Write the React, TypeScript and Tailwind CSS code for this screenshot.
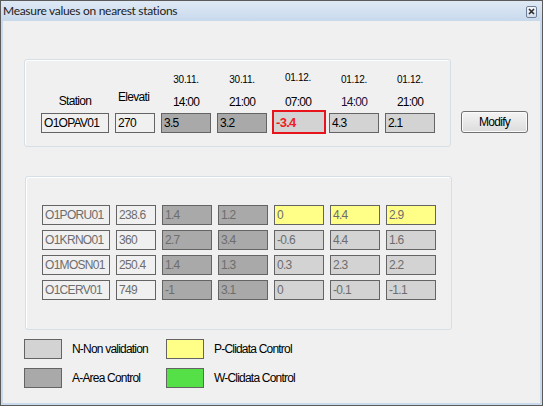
import React from 'react';

type Cell = { v: string; bg: string };

const GREY_N = 'bg-[#d3d3d3]';
const GREY_A = 'bg-[#a9a9a9]';
const YELLOW = 'bg-[#ffff88]';
const GREEN = 'bg-[#55e048]';

const text = "font-['Liberation_Sans',Arial,sans-serif] text-[12px] tracking-[-0.7px] leading-none";

const heads = [
  { date: '30.11.', time: '14:00', dateTop: 'mt-[14px]' },
  { date: '30.11.', time: '21:00', dateTop: 'mt-[14px]' },
  { date: '01.12.', time: '07:00', dateTop: 'mt-[12px]' },
  { date: '01.12.', time: '14:00', dateTop: 'mt-[14px]' },
  { date: '01.12.', time: '21:00', dateTop: 'mt-[14px]' },
];

const stations: { id: string; elev: string; cells: Cell[] }[] = [
  {
    id: 'O1PORU01',
    elev: '238.6',
    cells: [
      { v: '1.4', bg: GREY_A },
      { v: '1.2', bg: GREY_A },
      { v: '0', bg: YELLOW },
      { v: '4.4', bg: YELLOW },
      { v: '2.9', bg: YELLOW },
    ],
  },
  {
    id: 'O1KRNO01',
    elev: '360',
    cells: [
      { v: '2.7', bg: GREY_A },
      { v: '3.4', bg: GREY_A },
      { v: '-0.6', bg: GREY_N },
      { v: '4.4', bg: GREY_N },
      { v: '1.6', bg: GREY_N },
    ],
  },
  {
    id: 'O1MOSN01',
    elev: '250.4',
    cells: [
      { v: '1.4', bg: GREY_A },
      { v: '1.3', bg: GREY_A },
      { v: '0.3', bg: GREY_N },
      { v: '2.3', bg: GREY_N },
      { v: '2.2', bg: GREY_N },
    ],
  },
  {
    id: 'O1CERV01',
    elev: '749',
    cells: [
      { v: '-1', bg: GREY_A },
      { v: '3.1', bg: GREY_A },
      { v: '0', bg: GREY_N },
      { v: '-0.1', bg: GREY_N },
      { v: '-1.1', bg: GREY_N },
    ],
  },
];

function Box({ value, w, bg, muted }: { value: string; w: string; bg: string; muted?: boolean }) {
  return (
    <div
      className={`${w} h-[20px] shrink-0 border border-[#646464] ${bg} flex items-center pl-[2px] ${text} ${
        muted ? 'text-[#6d6d6d]' : 'text-black'
      }`}
    >
      {value}
    </div>
  );
}

function Legend({ bg, label, shift }: { bg: string; label: string; shift?: string }) {
  return (
    <div className={`flex items-center ${shift ?? ''}`}>
      <div className={`w-[38px] h-[20px] border border-[#646464] ${bg}`} />
      <span className={`ml-[10px] ${text} text-black tracking-[-0.8px]`}>{label}</span>
    </div>
  );
}

export default function App() {
  return (
    <div className="w-[543px] h-[406px] border border-[#5b5b5b] flex flex-col bg-[#c9daed]">
      {/* title bar */}
      <div className="h-[20px] shrink-0 flex items-center justify-between pl-[2px] pr-[5px] bg-gradient-to-b from-[#dfe9f5] to-[#c8d9ec]">
        <span className="font-['Lato',sans-serif] text-[12px] tracking-[-0.3px] text-[#222] leading-none">
          Measure values on nearest stations
        </span>
        <div className="w-[11px] h-[12px] mt-[1px] border border-[#6f7f95] rounded-[2px] bg-gradient-to-b from-[#f4f7fb] to-[#d3deeb] flex items-center justify-center">
          <svg width="7" height="7" viewBox="0 0 7 7">
            <path d="M1 1 L6 6 M6 1 L1 6" stroke="#2a2a2a" strokeWidth="1.6" />
          </svg>
        </div>
      </div>

      {/* client area */}
      <div className="flex-1 mx-[2px] mb-[2px] bg-[#f0f0f0] pt-[38px] pl-[21px]">
        <div className="flex items-start">
          {/* current station panel */}
          <div className="w-[427px] h-[88px] border border-[#d5dfe5] rounded-[3px] shadow-[inset_1px_1px_0_#ffffff] pl-[16px]">
            <div className="h-[53px] flex gap-[6px]">
              <div className="w-[68px] flex justify-center">
                <span className={`mt-[35px] ${text} text-black leading-[14px] tracking-[-0.5px]`}>Station</span>
              </div>
              <div className="w-[40px] flex">
                <span className={`mt-[31px] ml-[3px] ${text} text-black leading-[14px] tracking-[-0.5px]`}>Elevati</span>
              </div>
              {heads.map((h, i) => (
                <div key={i} className="w-[50px] flex flex-col items-center">
                  <span className={`${h.dateTop} font-['Liberation_Sans',Arial,sans-serif] text-[10px] tracking-[-0.3px] leading-[12px] text-black`}>
                    {h.date}
                  </span>
                  <span
                    className={`${i === 2 ? 'mt-[12px]' : 'mt-[10px]'} ${text} leading-[14px] tracking-[-0.8px] ${
                      i === 3 ? 'text-[#201040]' : 'text-black'
                    }`}
                  >
                    {h.time}
                  </span>
                </div>
              ))}
            </div>
            <div className="h-[20px] flex items-start gap-[6px]">
              <Box value="O1OPAV01" w="w-[68px]" bg="bg-[#f0f0f0]" />
              <Box value="270" w="w-[40px]" bg="bg-[#f0f0f0]" />
              <Box value="3.5" w="w-[50px]" bg={GREY_A} />
              <Box value="3.2" w="w-[50px]" bg={GREY_A} />
              <div className="w-[50px] shrink-0">
                <div className="w-[54px] h-[24px] -mt-[3px] -ml-[1px] border-2 border-[#e8141c] bg-[#d3d3d3] flex items-center pl-[2px]">
                  <span className={`${text} text-[13px] font-bold text-[#f01c24] tracking-[-0.5px]`}>-3.4</span>
                </div>
              </div>
              <Box value="4.3" w="w-[50px]" bg={GREY_N} />
              <Box value="2.1" w="w-[50px]" bg={GREY_N} />
            </div>
          </div>

          <button className="ml-[10px] mt-[52px] w-[67px] h-[22px] border border-[#707070] rounded-[3px] bg-gradient-to-b from-[#f4f4f4] to-[#dcdcdc] shadow-[inset_0_0_0_1px_#fbfbfb] flex items-center justify-center">
            <span className={`${text} text-black tracking-[-0.6px]`}>Modify</span>
          </button>
        </div>

        {/* nearest stations panel */}
        <div className="ml-[1px] mt-[29px] w-[427px] h-[154px] border border-[#d5dfe5] rounded-[3px] shadow-[inset_1px_1px_0_#ffffff] pl-[16px] pt-[28px] flex flex-col gap-[5px]">
          {stations.map((s) => (
            <div key={s.id} className="flex gap-[6px]">
              <Box value={s.id} w="w-[68px]" bg="bg-[#f0f0f0]" muted />
              <Box value={s.elev} w="w-[40px]" bg="bg-[#f0f0f0]" muted />
              {s.cells.map((c, i) => (
                <Box key={i} value={c.v} w="w-[50px]" bg={c.bg} muted />
              ))}
            </div>
          ))}
        </div>

        {/* legend */}
        <div className="mt-[8px] grid grid-cols-[142px_auto] gap-y-[9px]">
          <Legend bg={GREY_N} label="N-Non validation" />
          <Legend bg={YELLOW} label="P-Clidata Control" shift="mt-[1px]" />
          <Legend bg={GREY_A} label="A-Area Control" />
          <Legend bg={GREEN} label="W-Clidata Control" />
        </div>
      </div>
    </div>
  );
}
